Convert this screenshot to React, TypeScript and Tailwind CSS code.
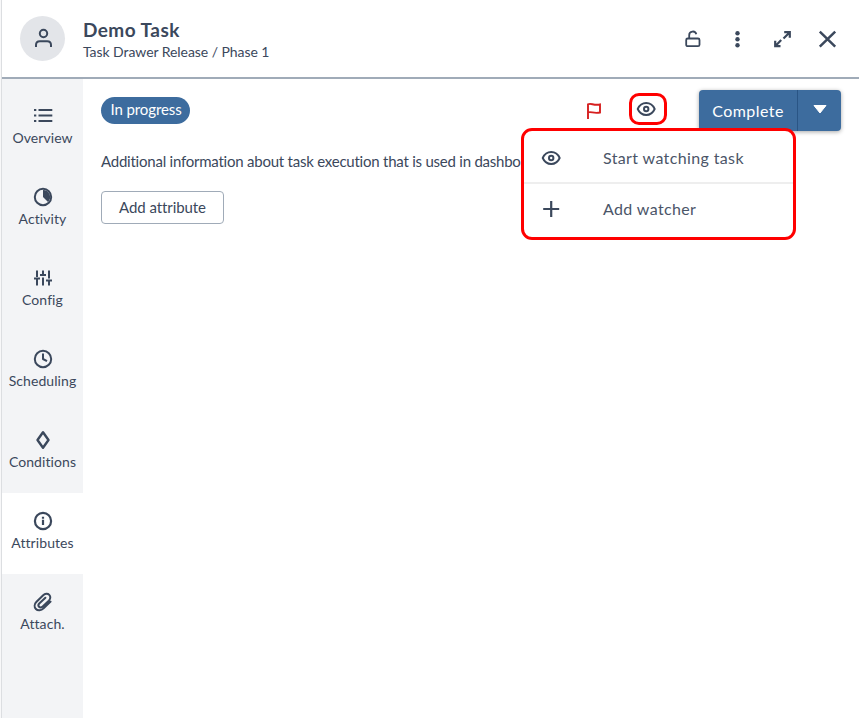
import React from "react";

type IconProps = { children: React.ReactNode; className?: string; width?: number };

function Icon({ children, className = "", width = 2 }: IconProps) {
  return (
    <svg
      viewBox="0 0 24 24"
      className={"block h-6 w-6 shrink-0 " + className}
      fill="none"
      stroke="currentColor"
      strokeWidth={width}
      strokeLinecap="butt"
      strokeLinejoin="round"
    >
      {children}
    </svg>
  );
}

const Eye = () => (
  <Icon width={1.9}>
    <path d="M3.700 12C5.500 8 8.500 6 12.200 6S18.900 8 20.700 12C18.900 16 15.900 18 12.200 18S5.500 16 3.700 12Z" />
    <circle cx="12.200" cy="12" r="2.200" strokeWidth="2" />
  </Icon>
);

const tabs = [
  {
    label: "Overview",
    icon: (
      <Icon width={2.200}>
        <path d="M7.500 6h13.800M7.500 11.500h13.800M7.500 17h13.800M3 6h2.300M3 11.500h2.300M3 17h2.300" />
      </Icon>
    ),
  },
  {
    label: "Activity",
    icon: (
      <Icon>
        <circle cx="12" cy="12" r="8.200" />
        <path d="M12 5a7 7 0 0 1 5 12L12 12Z" fill="currentColor" stroke="none" />
      </Icon>
    ),
  },
  {
    label: "Config",
    icon: (
      <Icon>
        <path d="M6 4.500v6.500M3 12.500h6M6 12.500v7M12 4.500v4.500M9 9h6M12 11.500v8M18 4.500v8M15 14.500h6M18 14.500v5" />
      </Icon>
    ),
  },
  {
    label: "Scheduling",
    icon: (
      <Icon>
        <circle cx="12" cy="12" r="8.200" />
        <path d="M12 6.500V12l4 2.200" />
      </Icon>
    ),
  },
  {
    label: "Conditions",
    icon: (
      <Icon width={2.400}>
        <path d="M12 4.200 17.500 12 12 19.800 6.500 12Z" />
      </Icon>
    ),
  },
  {
    label: "Attributes",
    active: true,
    icon: (
      <Icon width={2.200}>
        <circle cx="12" cy="12" r="8.100" />
        <path d="M12 7.700v2M12 10.700v5.300" />
      </Icon>
    ),
  },
  {
    label: "Attach.",
    icon: (
      <Icon width={2}>
        <path
          strokeLinecap="round"
          d="M19.600 11.600 12.600 18.400C10.200 20.700 6.700 20.900 4.900 19 3 17 3.300 14 5.500 11.800L12.200 5.300C14 3.600 16.700 3.300 18.300 4.900 19.900 6.500 19.500 9 17.800 10.700L11.700 16.500C10.500 17.600 8.900 17.700 8 16.800 7.100 15.800 7.300 14.400 8.500 13.300L14.400 7.800"
        />
      </Icon>
    ),
  },
];

function Header() {
  return (
    <header className="flex h-[79px] shrink-0 items-start border-b-2 border-[#a0abb8] pl-[18px]">
      <div className="mt-4 flex h-[45px] w-[45px] items-center justify-center rounded-full bg-[#e3e5e9]">
        <Icon>
          <circle cx="12.500" cy="6.500" r="3.700" />
          <path d="M5 20v-2c0-2.300 1.500-3.800 3.800-3.800h7.400c2.300 0 3.800 1.500 3.800 3.800V20" />
        </Icon>
      </div>
      <div className="ml-[18px] mt-[18px]">
        <h1 className="text-[19px] font-bold leading-6 tracking-[0.45px]">Demo Task</h1>
        <p className="text-sm leading-5 tracking-[-0.06px]">Task Drawer Release / Phase 1</p>
      </div>
      <div className="ml-auto mr-5 mt-[27px] flex gap-[21px]">
        <Icon width={1.800}>
          <rect x="6.200" y="11.500" width="13.300" height="7.700" rx="1.500" />
          <path d="M9.200 11.500V8.300a3.600 3.600 0 0 1 7.100-1" />
        </Icon>
        <Icon>
          <g fill="currentColor" stroke="none">
            <circle cx="12.500" cy="6.200" r="2.200" />
            <circle cx="12.500" cy="12.200" r="2.200" />
            <circle cx="12.500" cy="18.200" r="2.200" />
          </g>
        </Icon>
        <Icon width={2.200}>
          <path d="M14.200 5.200h5.600v5.600M19.500 5.500l-6 6M10.500 19.200H5.200V13.700M5.200 19.200l6-6.200" strokeLinejoin="miter" />
        </Icon>
        <Icon width={2.500}>
          <path d="m4.800 4.700 15.400 15M20.200 4.700l-15.400 15" />
        </Icon>
      </div>
    </header>
  );
}

function Menu() {
  return (
    <div className="absolute left-[438px] top-[49px] z-10 h-[112px] w-[275px] rounded-[11px] border-[3px] border-[#ff0000] bg-white text-base tracking-[0.37px] text-[#4b5568]">
      <div className="flex h-[53px] items-center border-b-2 border-[#eeeeee] pl-[15px] pt-0.5">
        <span className="text-[#3b485c]"><Eye /></span>
        <span className="ml-10">Start watching task</span>
      </div>
      <div className="flex h-[50px] items-center pl-[15px]">
        <Icon className="text-[#3b485c]" width={2.200}><path d="M12.200 4v16M4.200 12h16" /></Icon>
        <span className="ml-10">Add watcher</span>
      </div>
    </div>
  );
}

export default function App() {
  return (
    <div className="flex h-[718px] w-[859px] overflow-hidden bg-white font-['Lato',sans-serif] text-[#3b485c]">
      <div className="w-[2px] shrink-0 border-r border-[#dcdee1] bg-[#f8f8f9]" />
      <div className="flex min-w-0 flex-1 flex-col">
        <Header />
        <div className="flex flex-1">
          <nav className="w-[81px] shrink-0 bg-[#f3f4f6] pt-[9px]">
            {tabs.map((tab) => (
              <div
                key={tab.label}
                className={"flex h-[81px] flex-col items-center pt-4 " + (tab.active ? "bg-white" : "")}
              >
                {tab.icon}
                <span className="-mt-px text-sm leading-[22px] tracking-[0.08px]">{tab.label}</span>
              </div>
            ))}
          </nav>
          <main className="relative flex-1 px-[18px] pt-[11px]">
            <div className="flex h-[41px] items-start">
              <span className="mt-[7px] flex h-[27px] w-[89px] items-center justify-center rounded-full bg-[#3d6c9e] pb-0.5 pl-px text-[15px] tracking-[-0.1px] text-white">
                In progress
              </span>
              <span className="ml-auto mt-[9px] text-[#d61f1f]">
                <Icon width={1.900}>
                  <path d="M6 20V5.300c3-1.600 5.500 1.500 12 .2V13.500c-6.500 1.500-9-1.500-12 0" strokeLinejoin="miter" />
                </Icon>
              </span>
              <span className="ml-[23px] mt-[3px] flex h-8 w-[38px] items-center justify-center rounded-[10px] border-[3px] border-[#ff0000] pr-1">
                <Eye />
              </span>
              <div className="ml-8 flex h-[41px] w-[142px] rounded bg-[#3d6c9e] text-white shadow-[0_1px_4px_rgba(0,0,0,0.35)]">
                <span className="flex w-[98px] items-center justify-center text-base tracking-[0.45px]">Complete</span>
                <span className="flex flex-1 items-start justify-center border-l border-[#2a5585] pt-[15px]">
                  <svg viewBox="0 0 14 9" className="h-[9px] w-[14px]">
                    <path d="M1 .5h12L7 8Z" fill="white" stroke="white" strokeLinejoin="round" />
                  </svg>
                </span>
              </div>
            </div>
            <p className="mt-5 whitespace-nowrap text-[15px] leading-5 tracking-[-0.23px]">
              Additional information about task execution that is used in dashbo
            </p>
            <button className="mt-5 h-[33px] w-[123px] rounded border border-[#a0abb8] text-[15px] tracking-[-0.08px]">
              Add attribute
            </button>
            <Menu />
          </main>
        </div>
      </div>
    </div>
  );
}
